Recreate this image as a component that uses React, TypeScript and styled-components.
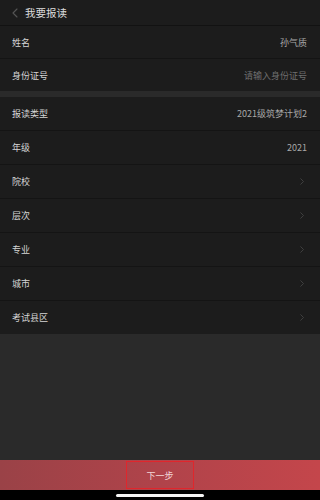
import React from "react";
import styled, { createGlobalStyle } from "styled-components";

const GlobalStyle = createGlobalStyle`
  html, body {
    margin: 0;
    padding: 0;
    background: #2a2a2a;
  }
  body {
    font-family: "Noto Sans CJK SC", "Noto Sans", sans-serif;
  }
`;

const Page = styled.div`
  width: 100%;
  height: 500px;
  display: flex;
  flex-direction: column;
  background: #2a2a2a;
  overflow: hidden;
`;

const Header = styled.header`
  height: 25px;
  display: flex;
  align-items: center;
  gap: 7px;
  padding: 0 12px;
  background: #1c1c1c;
  border-bottom: 1px solid #121212;
  color: #dcdcdc;
  font-size: 10.5px;
`;

const Group = styled.section`
  background: #1c1c1c;
`;

const Gap = styled.div`
  height: 6px;
  background: #2a2a2a;
`;

const Row = styled.div<{ $h?: number }>`
  height: ${(p) => p.$h ?? 32}px;
  display: flex;
  align-items: center;
  justify-content: space-between;
  padding: 0 13px 0 12px;
  font-size: 9px;
  border-bottom: 1px solid #141414;

  &:last-child {
    border-bottom: none;
  }
`;

const Label = styled.span`
  color: #d6d6d6;
`;

const Value = styled.span<{ $placeholder?: boolean }>`
  color: ${(p) => (p.$placeholder ? "#6f6f6f" : "#a8a8a8")};
`;

const Chevron = styled.span`
  display: flex;
  margin-right: 3px;
`;

const Spacer = styled.div`
  flex: 1;
`;

const ActionBar = styled.div`
  height: 30px;
  display: flex;
  justify-content: center;
  align-items: stretch;
  background: linear-gradient(90deg, #9a4247 0%, #b0434a 50%, #c4464b 100%);
`;

const NextButton = styled.button`
  width: 68px;
  margin: 1px 0;
  border: 1px solid #e0262c;
  background: transparent;
  color: #f2d6d6;
  font-family: inherit;
  font-size: 9px;
  padding: 0;
`;

const HomeBar = styled.div`
  height: 10px;
  background: #000;
  display: flex;
  justify-content: center;
  align-items: center;
`;

const Indicator = styled.div`
  width: 88px;
  height: 3px;
  border-radius: 2px;
  background: #f5f5f5;
`;

const ChevronIcon = ({ color = "#4a4a4a", size = 7 }: { color?: string; size?: number }) => (
  <svg width={size * 0.6} height={size} viewBox="0 0 6 10" fill="none">
    <path d="M1 1l4 4-4 4" stroke={color} strokeWidth="1.1" strokeLinecap="round" strokeLinejoin="round" />
  </svg>
);

const BackIcon = () => (
  <svg width="6" height="10" viewBox="0 0 6 10" fill="none">
    <path d="M5 1L1 5l4 4" stroke="#555" strokeWidth="1.1" strokeLinecap="round" strokeLinejoin="round" />
  </svg>
);

const fields = [
  { label: "报读类型", value: "2021级筑梦计划2" },
  { label: "年级", value: "2021" },
  { label: "院校" },
  { label: "层次" },
  { label: "专业" },
  { label: "城市" },
  { label: "考试县区" },
];

export default function App() {
  return (
    <>
      <GlobalStyle />
      <Page>
        <Header>
          <BackIcon />
          <span>我要报读</span>
        </Header>

        <Group>
          <Row>
            <Label>姓名</Label>
            <Value>孙气质</Value>
          </Row>
          <Row>
            <Label>身份证号</Label>
            <Value $placeholder>请输入身份证号</Value>
          </Row>
        </Group>

        <Gap />

        <Group>
          {fields.map((f) => (
            <Row key={f.label} $h={33}>
              <Label>{f.label}</Label>
              {f.value ? (
                <Value>{f.value}</Value>
              ) : (
                <Chevron>
                  <ChevronIcon />
                </Chevron>
              )}
            </Row>
          ))}
        </Group>

        <Spacer />

        <ActionBar>
          <NextButton>下一步</NextButton>
        </ActionBar>
        <HomeBar>
          <Indicator />
        </HomeBar>
      </Page>
    </>
  );
}
